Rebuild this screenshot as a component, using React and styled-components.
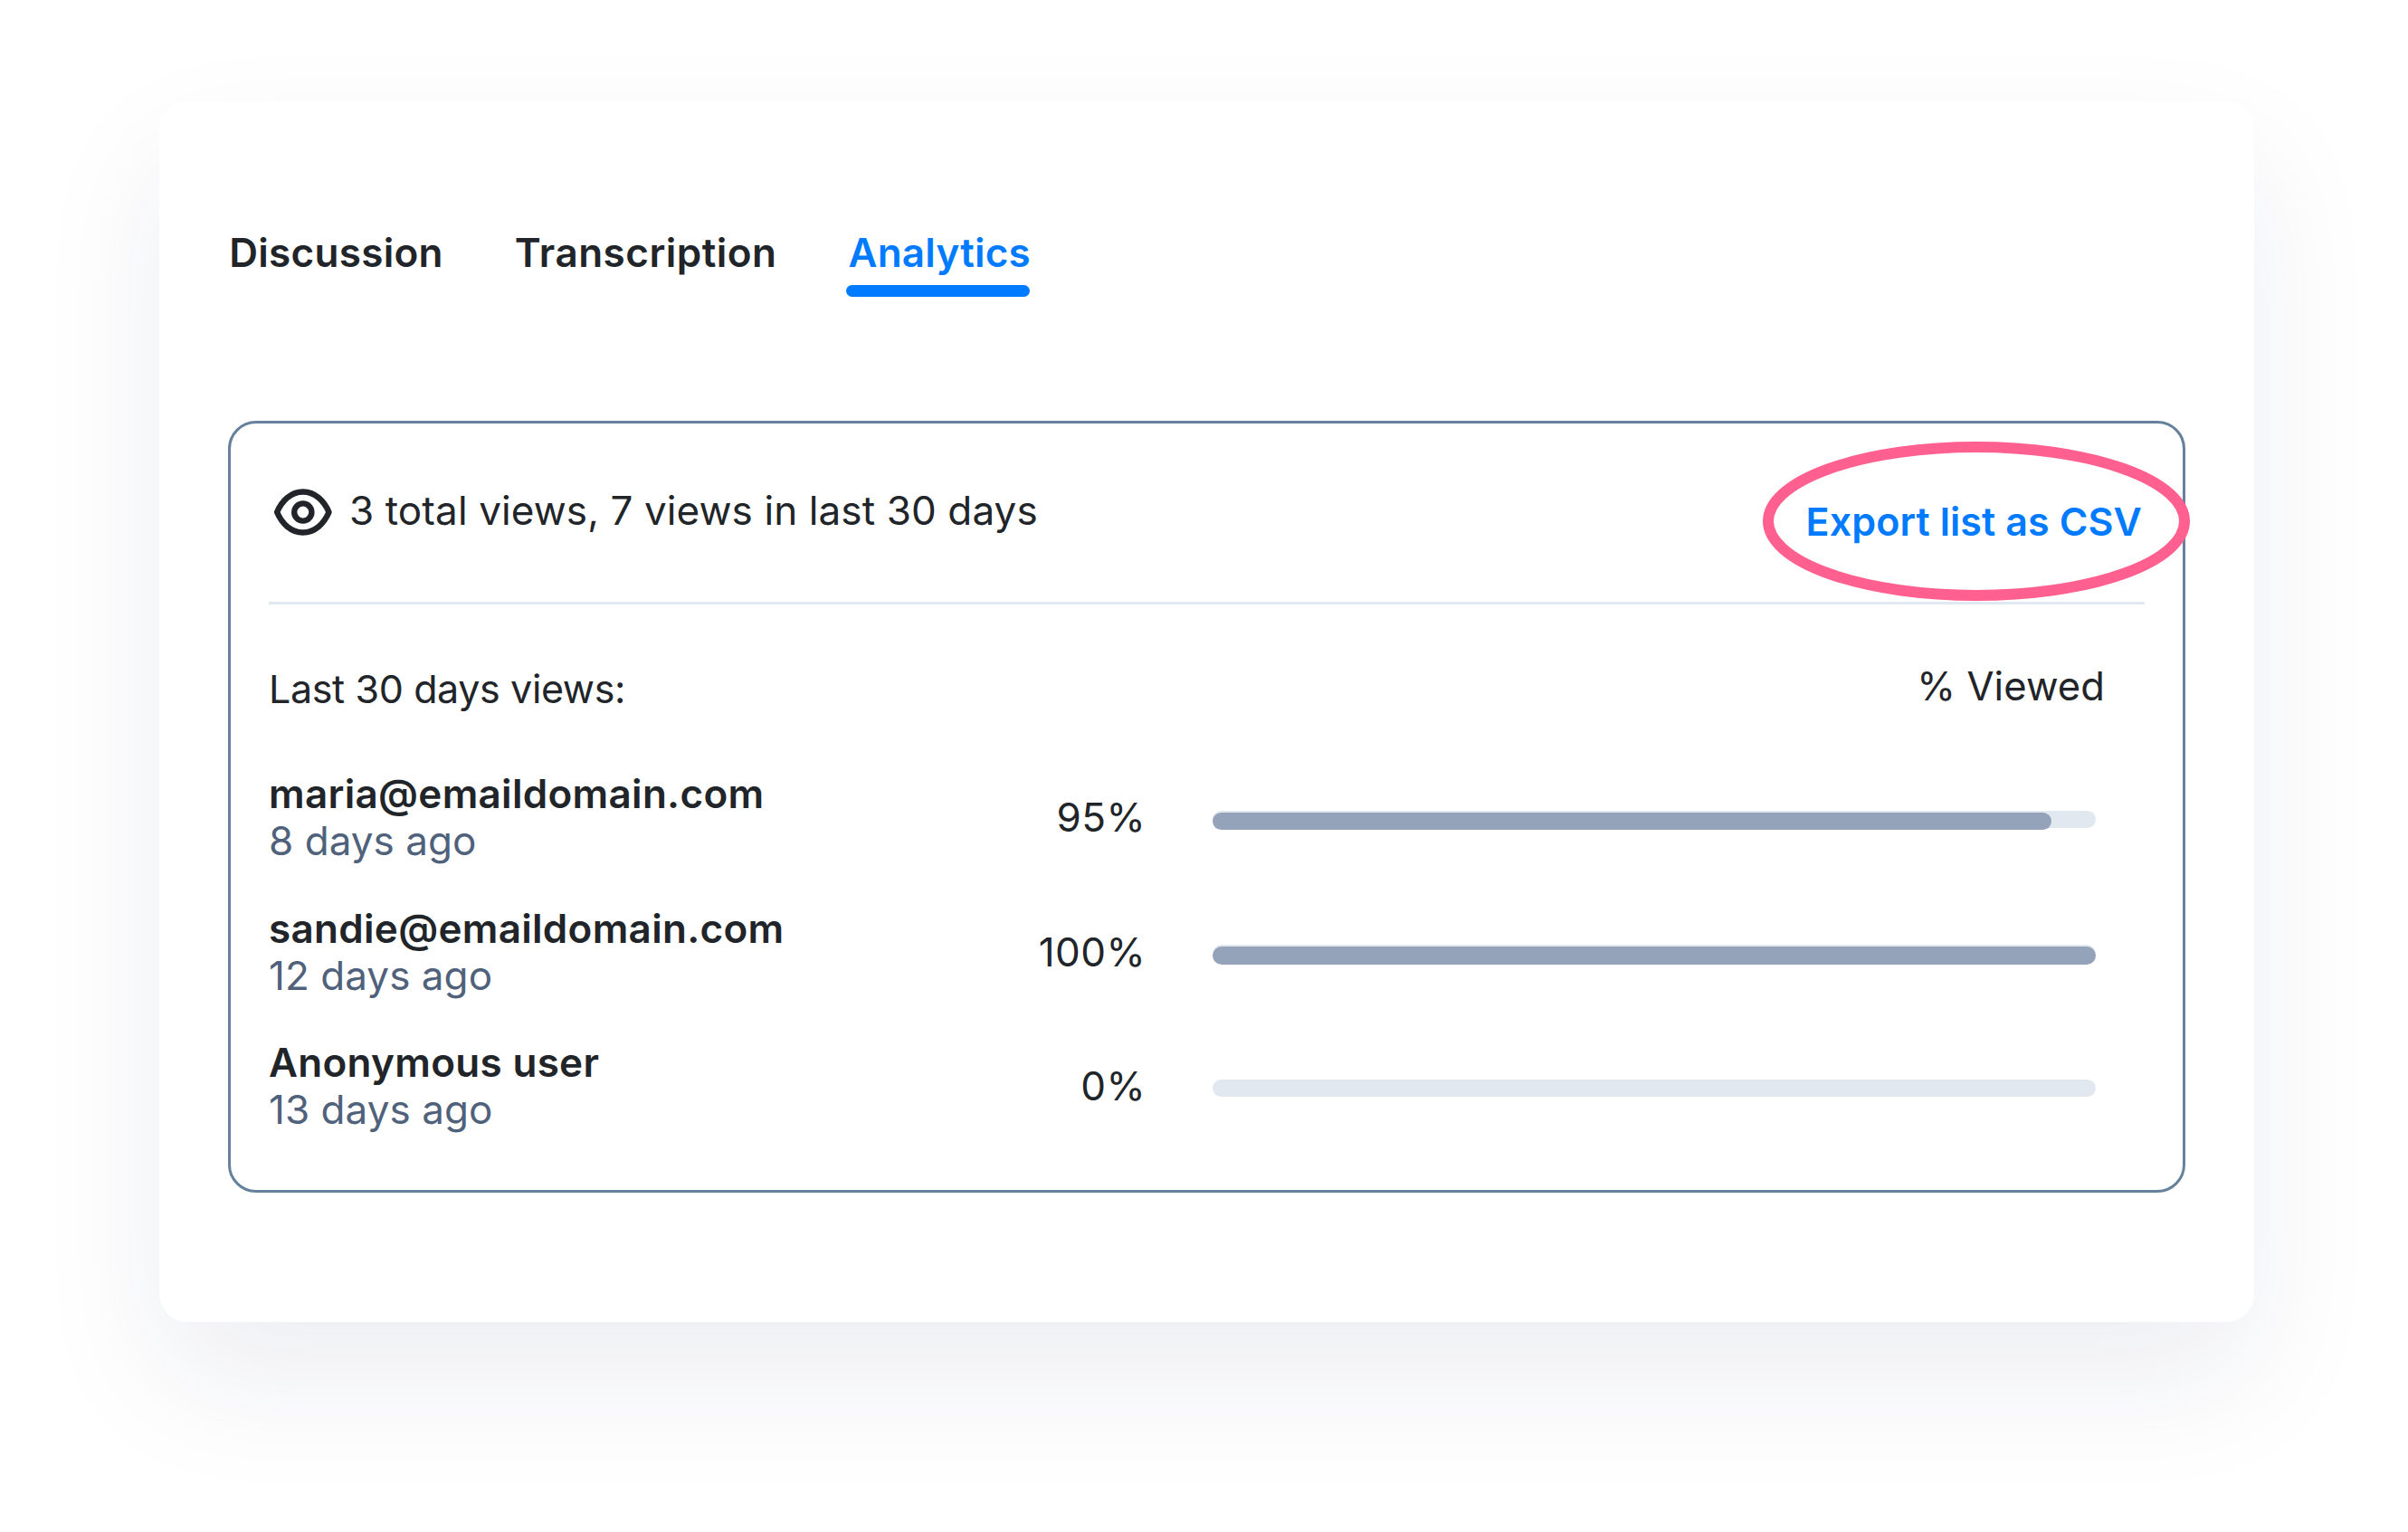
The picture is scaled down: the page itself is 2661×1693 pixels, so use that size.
import React, { useState } from "react";
import styled, { createGlobalStyle } from "styled-components";

const tabs = [
  { name: "Discussion", spacing: 0.3 },
  { name: "Transcription", spacing: 0.5 },
  { name: "Analytics", spacing: 0.2 },
];

const viewers = [
  { id: 1, name: "maria@emaildomain.com", date: "8 days ago", viewed: 95 },
  { id: 2, name: "sandie@emaildomain.com", date: "12 days ago", viewed: 100 },
  { id: 3, name: "Anonymous user", date: "13 days ago", viewed: 0 },
];

const EyeIcon = () => (
  <Eye viewBox="0 0 80 72">
    <circle cx="39.8" cy="36" r="9.6" />
    <path d="M11.1 36C16.5 23.5 26.5 13.5 39.8 13.5C53.1 13.5 63.1 23.5 68.5 36C63.1 48.5 53.1 58.5 39.8 58.5C26.5 58.5 16.5 48.5 11.1 36Z" />
  </Eye>
);

const App = () => {
  const [active, setActive] = useState("Analytics");
  return (
    <>
      <GlobalStyle />
      <Page>
        <Card>
          <Tabs>
            {tabs.map((tab) => (
              <Tab
                key={tab.name}
                $active={tab.name === active}
                $spacing={tab.spacing}
                onClick={() => setActive(tab.name)}
              >
                {tab.name}
              </Tab>
            ))}
          </Tabs>
          <Panel>
            <PanelHeader>
              <EyeIcon />
              <Total>3 total views, 7 views in last 30 days</Total>
              <Export>
                Export list as CSV
                <Highlight viewBox="0 0 472 176">
                  <ellipse cx="236" cy="88" rx="230" ry="82" />
                </Highlight>
              </Export>
            </PanelHeader>
            <ListHeader>
              <ListTitle>Last 30 days views:</ListTitle>
              <ViewedTitle>% Viewed</ViewedTitle>
            </ListHeader>
            <List>
              {viewers.map((item) => (
                <Row key={item.id}>
                  <Viewer>
                    <Name>{item.name}</Name>
                    <Ago>{item.date}</Ago>
                  </Viewer>
                  <Percent>{item.viewed}%</Percent>
                  <Track>
                    {item.viewed > 0 && (
                      <Fill style={{ width: `${item.viewed}%` }} />
                    )}
                  </Track>
                </Row>
              ))}
            </List>
          </Panel>
        </Card>
      </Page>
    </>
  );
};

export default App;

const GlobalStyle = createGlobalStyle`
  * {
    box-sizing: border-box;
  }
  body {
    margin: 0;
    background: #fff;
    color: #212529;
    font-family: Inter, "Liberation Sans", sans-serif;
    font-size: 44px;
    line-height: 52px;
    white-space: nowrap;
    overflow: hidden;
  }
`;
const Page = styled.div`
  min-height: 1693px;
  padding: 112px 170px 0 176px;
`;
const Card = styled.div`
  height: 1349px;
  padding: 141px 76px 0;
  border-radius: 31px;
  background: #fff;
  box-shadow: 0 64px 144px rgba(28, 44, 84, 0.078);
`;
const Tabs = styled.div`
  display: flex;
  gap: 79px;
  height: 75px;
  padding-left: 1.2px;
`;
const Tab = styled.button`
  display: flex;
  flex-direction: column;
  padding: 0;
  border: none;
  background: none;
  font: inherit;
  font-weight: 600;
  letter-spacing: ${(p) => p.$spacing}px;
  color: ${(p) => (p.$active ? "#007bff" : "#212529")};
  cursor: pointer;

  &::after {
    content: "";
    width: calc(100% + 2px);
    height: 13px;
    margin: 10px 0 0 -3px;
    border-radius: 7px;
    background: ${(p) => (p.$active ? "#007bff" : "transparent")};
  }
`;
const Panel = styled.div`
  height: 853px;
  margin-top: 137px;
  padding: 0 42px;
  border: 3px solid #65819b;
  border-radius: 31px;
`;
const PanelHeader = styled.div`
  display: flex;
  align-items: flex-start;
  height: 200px;
  padding-top: 62px;
  border-bottom: 3px solid #e2e8f0;
`;
const Eye = styled.svg`
  width: 80px;
  height: 72px;
  margin: 0 11px 0 -2px;
  fill: none;
  stroke: #212529;
  stroke-width: 6.4;
  stroke-linejoin: round;
`;
const Total = styled.div`
  padding-top: 8px;
  letter-spacing: 0.11px;
`;
const Export = styled.div`
  position: relative;
  margin: 20px 3px 0 auto;
  font-size: 43px;
  font-weight: 600;
  letter-spacing: 0.1px;
  color: #007bff;
`;
const Highlight = styled.svg`
  position: absolute;
  top: -62px;
  left: -47.5px;
  width: 472px;
  height: 176px;
  fill: none;
  stroke: #ff6090;
  stroke-width: 12;
  pointer-events: none;
`;
const ListHeader = styled.div`
  display: flex;
  justify-content: space-between;
  padding: 64px 44px 0 0;
`;
const ListTitle = styled.div`
  padding-top: 3.4px;
  font-size: 43px;
  letter-spacing: -0.37px;
`;
const ViewedTitle = styled.div`
  font-size: 43.5px;
  letter-spacing: 0.1px;
`;
const List = styled.div`
  display: flex;
  flex-direction: column;
  gap: 44.5px;
  padding-top: 64px;
`;
const Row = styled.div`
  display: flex;
  align-items: center;
  height: 104px;
`;
const Viewer = styled.div`
  width: 669px;
`;
const Name = styled.div`
  font-weight: 600;
  letter-spacing: 0.3px;
`;
const Ago = styled.div`
  letter-spacing: 0.05px;
  color: #50627b;
`;
const Percent = styled.div`
  width: 300px;
  margin-right: 74px;
  text-align: right;
  letter-spacing: 0.4px;
`;
const Track = styled.div`
  width: 976px;
  height: 19.5px;
  margin-top: 4px;
  padding-top: 2px;
  border-radius: 10px;
  background: #e2e8f0;
`;
const Fill = styled.div`
  min-width: 20px;
  height: 19.5px;
  border-radius: 10px;
  background: #94a3b9;
`;
